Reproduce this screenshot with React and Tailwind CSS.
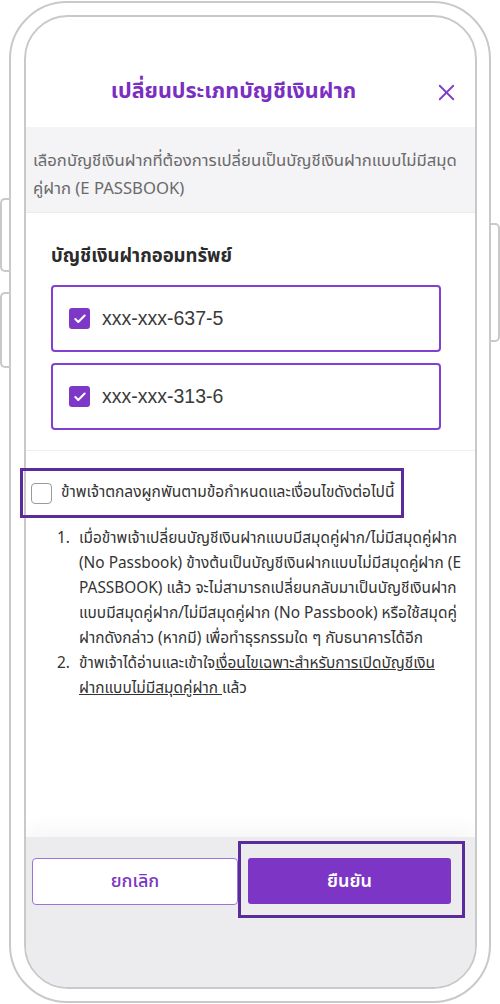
import { Check, X } from 'lucide-react'

const thai = { fontFamily: '"Noto Sans Thai", "Liberation Sans", "Noto Sans", "DejaVu Sans", sans-serif' }

const accounts = ['xxx-xxx-637-5', 'xxx-xxx-313-6']

function SideButton({ className }) {
  return <div className={`absolute w-[11px] border-2 border-[#c9c9c9] bg-white ${className}`} />
}

export default function App() {
  return (
    <div className="relative w-[500px] h-[1004px] bg-white overflow-hidden" style={thai}>
      {/* hardware buttons */}
      <SideButton className="left-[0px] top-[198px] h-[74px] border-r-0 rounded-l-[5px]" />
      <SideButton className="left-[0px] top-[292px] h-[76px] border-r-0 rounded-l-[5px]" />
      <SideButton className="right-[0px] top-[223px] h-[119px] border-l-0 rounded-r-[5px]" />

      {/* phone shell */}
      <div className="relative ml-[9px] mt-[1px] w-[482px] h-[1002px] rounded-[58px] border-[2.5px] border-[#c9c9c9] bg-white">
        {/* screen */}
        <div className="ml-[13px] mt-[12px] w-[453px] h-[974px] rounded-[44px] border-2 border-[#c9c9c9] overflow-hidden flex flex-col bg-white">
          <div className="flex-1 flex flex-col">
            {/* header */}
            <div className="relative h-[110px] shrink-0">
              <h1 className="pt-[59px] pr-[34px] text-center text-[21.5px] leading-[32px] font-bold text-[#7a2fc2]">
                เปลี่ยนประเภทบัญชีเงินฝาก
              </h1>
              <X className="absolute right-[15px] top-[62px] w-[27px] h-[27px] text-[#7b3ec6]" strokeWidth={1.6} />
            </div>

            {/* intro band */}
            <div className="h-[86px] shrink-0 bg-[#f4f3f6] border-b border-[#ebeaee] pl-[7px] pr-[8px] pt-[20px] text-[16.7px] leading-[28px] text-[#6a6a6a] whitespace-nowrap">
              เลือกบัญชีเงินฝากที่ต้องการเปลี่ยนเป็นบัญชีเงินฝากแบบไม่มีสมุด
              <br />
              คู่ฝาก (E PASSBOOK)
            </div>

            {/* accounts */}
            <div className="pl-[25px] pt-[30px] pb-[20px] border-b border-[#eeeeee]">
              <h2 className="text-[18.5px] leading-[26px] font-bold text-[#2b2b2b]">บัญชีเงินฝากออมทรัพย์</h2>
              <div className="mt-[16px] flex flex-col gap-[11px]">
                {accounts.map(a => (
                  <div key={a} className="w-[390px] h-[67px] rounded-[4px] border-2 border-[#8140cf] flex items-center pl-[16px] gap-[12px]">
                    <span className="w-[21px] h-[21px] rounded-[3px] bg-[#7e38c8] flex items-center justify-center">
                      <Check className="w-[14px] h-[14px] text-white" strokeWidth={3.5} />
                    </span>
                    <span className="text-[19.5px] text-[#3a3a3a]" style={{ fontFamily: '"Liberation Sans", sans-serif' }}>{a}</span>
                  </div>
                ))}
              </div>
            </div>

            {/* consent */}
            <div className="pt-[29px] pl-[5px]">
              <label className="flex items-center gap-[9px] h-[26px]">
                <span className="w-[21px] h-[21px] rounded-[4px] border-[1.5px] border-[#9a9a9a] bg-white" />
                <span className="text-[15.5px] leading-[26px] text-[#333] whitespace-nowrap">ข้าพเจ้าตกลงผูกพันตามข้อกำหนดและเงื่อนไขดังต่อไปนี้</span>
              </label>

              <ol className="mt-[20px] pl-[26px] text-[15.4px] leading-[25px] text-[#333] whitespace-nowrap">
                <li className="flex">
                  <span className="w-[22px] shrink-0">1.</span>
                  <span>
                    เมื่อข้าพเจ้าเปลี่ยนบัญชีเงินฝากแบบมีสมุดคู่ฝาก/ไม่มีสมุดคู่ฝาก<br />
                    (No Passbook) ข้างต้นเป็นบัญชีเงินฝากแบบไม่มีสมุดคู่ฝาก (E<br />
                    PASSBOOK) แล้ว จะไม่สามารถเปลี่ยนกลับมาเป็นบัญชีเงินฝาก<br />
                    แบบมีสมุดคู่ฝาก/ไม่มีสมุดคู่ฝาก (No Passbook) หรือใช้สมุดคู่<br />
                    ฝากดังกล่าว (หากมี) เพื่อทำธุรกรรมใด ๆ กับธนาคารได้อีก
                  </span>
                </li>
                <li className="flex">
                  <span className="w-[22px] shrink-0">2.</span>
                  <span>
                    ข้าพเจ้าได้อ่านและเข้าใจ<span className="underline">เงื่อนไขเฉพาะสำหรับการเปิดบัญชีเงิน</span><br />
                    <span className="underline">ฝากแบบไม่มีสมุดคู่ฝาก </span>แล้ว
                  </span>
                </li>
              </ol>
            </div>
          </div>

          {/* footer */}
          <div className="h-[150px] shrink-0 bg-[#ececee] shadow-[0_-10px_18px_rgba(0,0,0,0.035)] pt-[21px] pl-[6px] flex gap-[10px] items-start">
            <button className="w-[206px] h-[47px] rounded-[4px] border-[1.5px] border-[#9d74d8] bg-white text-[18px] font-medium text-[#7b35c4]">
              ยกเลิก
            </button>
            <button className="w-[203px] h-[46px] rounded-[3px] bg-[#7d35c6] text-[18px] font-semibold text-white">
              ยืนยัน
            </button>
          </div>
        </div>
      </div>

      {/* annotation highlights */}
      <div className="absolute left-[20px] top-[468px] w-[384px] h-[50px] border-[3px] border-[#5b2a9b]" />
      <div className="absolute left-[238px] top-[841px] w-[227px] h-[77px] border-[3px] border-[#5b2a9b]" />
    </div>
  )
}
